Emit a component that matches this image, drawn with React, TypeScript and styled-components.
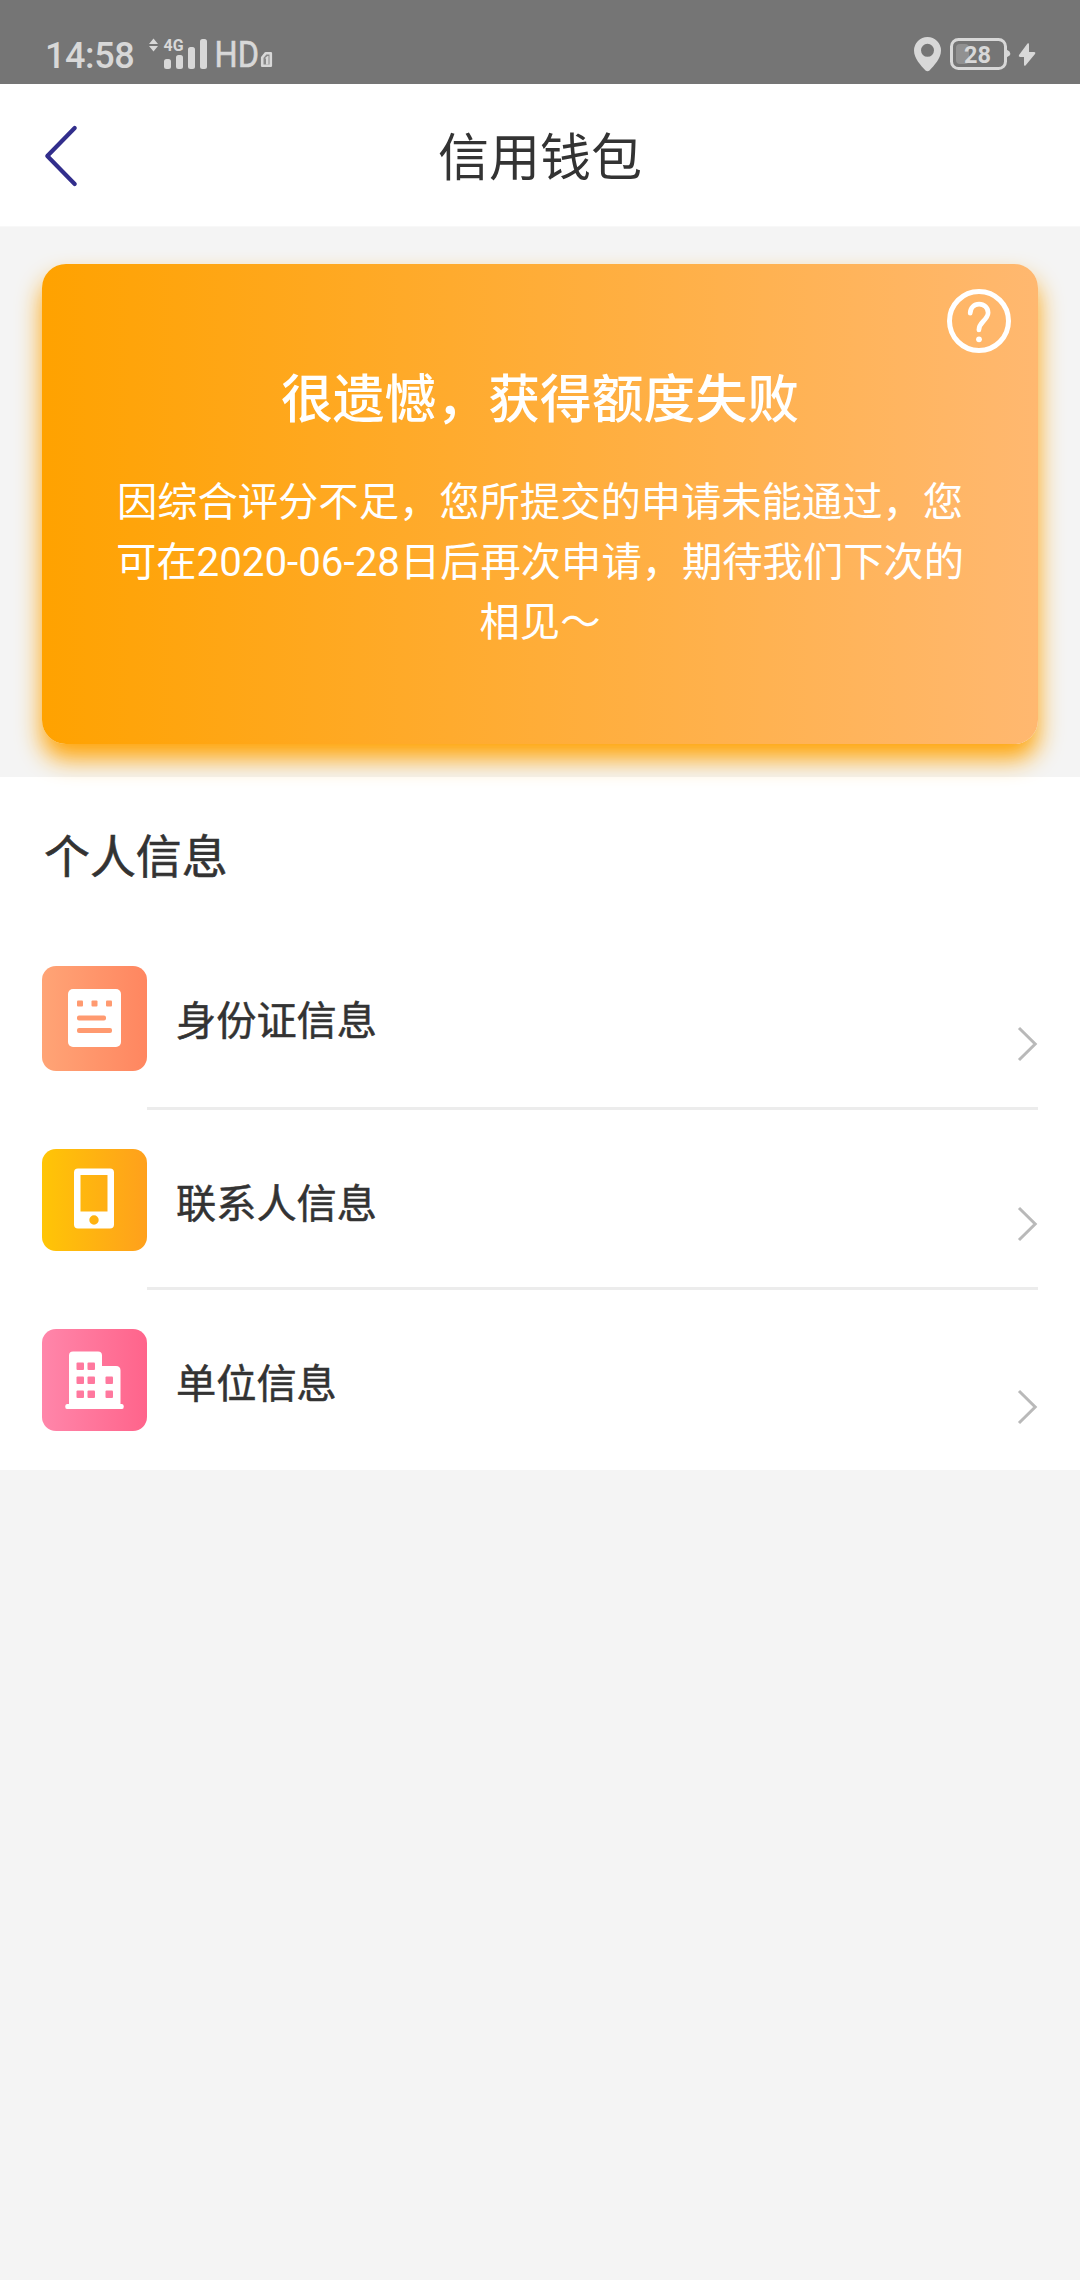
import React from "react";
import styled, { createGlobalStyle } from "styled-components";

const GlobalStyle = createGlobalStyle`
  * { box-sizing: border-box; }
  body {
    margin: 0;
    background: #f4f4f4;
    color: #333;
    font-family: Roboto, "Noto Sans CJK SC", sans-serif;
  }
  h1, h2, h3, p, ul { margin: 0; padding: 0; font-weight: 400; }
  svg { display: block; flex: none; }
`;

const Page = styled.main`
  display: flex;
  flex-direction: column;
  width: 1080px;
  min-height: 2280px;
  background: #f4f4f4;
`;

const StatusBar = styled.div`
  display: flex;
  justify-content: space-between;
  height: 84px;
  padding: 0 42px 0 45px;
  background: #757575;
  color: #d8d8d8;
`;

const StatusGroup = styled.div`
  display: flex;
  align-items: flex-start;
`;

const Clock = styled.span`
  width: 103px;
  padding-top: 36px;
  font-size: 36px;
  letter-spacing: -0.4px;
  line-height: 40px;
  font-weight: 500;
  white-space: nowrap;
`;

const Header = styled.header`
  display: grid;
  grid-template-columns: 120px 1fr 120px;
  align-items: center;
  height: 143px;
  background: #fff;
  border-bottom: 1px solid #f8f8f8;
`;

const BackButton = styled.button`
  display: flex;
  padding: 2px 0 0 42px;
  border: 0;
  background: none;
`;

const Title = styled.h1`
  padding-top: 7px;
  font-size: 51px;
  line-height: 70px;
  font-weight: 400;
  text-align: center;
`;

const Banner = styled.section`
  height: 550px;
  padding: 37px 42px 33px;
`;

const ResultCard = styled.article`
  position: relative;
  z-index: 1;
  display: flex;
  flex-direction: column;
  height: 480px;
  padding: 25px 27px 0;
  border-radius: 24px;
  background: linear-gradient(90deg, #ffa200, #ffb870);
  box-shadow: 0 15px 24px #ffa509;
  color: #fff;
  text-align: center;
`;

const HelpButton = styled.button`
  align-self: flex-end;
  display: flex;
  padding: 0;
  border: 0;
  background: none;
`;

const ResultTitle = styled.h2`
  margin-top: 12px;
  font-size: 51.8px;
  line-height: 72px;
  font-weight: 500;
`;

const ResultText = styled.p`
  width: 860px;
  margin: 36px auto 0;
  font-size: 40.3px;
  line-height: 60px;
  font-weight: 400;
`;

const InfoSection = styled.section`
  display: flex;
  flex-direction: column;
  height: 693px;
  background: #fff;
`;

const SectionTitle = styled.h2`
  height: 153px;
  padding: 4px 0 0 44px;
  font-size: 45.9px;
  line-height: 153px;
  font-weight: 400;
  -webkit-text-stroke: 0.6px #333;
`;

const InfoList = styled.ul`
  list-style: none;
`;

const InfoRow = styled.li`
  display: flex;
  height: 180px;
  padding: 0 42px;
`;

const Tile = styled.span<{ $from: string; $to: string; $top: number; $height: number }>`
  display: flex;
  flex: none;
  width: 105px;
  height: ${(p) => p.$height}px;
  margin-top: ${(p) => p.$top}px;
  border-radius: 14px;
  background: linear-gradient(90deg, ${(p) => p.$from}, ${(p) => p.$to});
`;

const RowBody = styled.div<{ $divider: boolean }>`
  display: flex;
  flex: 1;
  justify-content: space-between;
  border-bottom: ${(p) => (p.$divider ? "3px solid #ececec" : "0")};
`;

const RowLabel = styled.h3<{ $offset: number }>`
  padding: ${(p) => p.$offset}px 0 0 29px;
  font-size: 40.200px;
  line-height: 60px;
  font-weight: 400;
  -webkit-text-stroke: 0.5px #333;
`;

const RowArrow = styled.span<{ $offset: number }>`
  padding-top: ${(p) => p.$offset}px;
`;

const NetworkIcons = () => (
  <svg width="150" height="84" viewBox="148 0 150 84" fill="#d8d8d8">
    <path d="M149 44l4.500-5.500 4.500 5.500zM149 46h9l-4.500 5.500z" />
    <text x="163.500" y="51" fontFamily="Roboto, sans-serif" fontSize="17" fontWeight="700" textLength="20" lengthAdjust="spacingAndGlyphs">4G</text>
    <rect x="164" y="59" width="7" height="10" rx="2.500" />
    <rect x="176" y="55" width="7" height="14" rx="2.500" />
    <rect x="188" y="47" width="7" height="22" rx="2.500" />
    <rect x="200" y="39" width="7" height="30" rx="2.500" />
    <text x="214.500" y="67" fontFamily="Roboto, sans-serif" fontSize="36" textLength="44.500" lengthAdjust="spacingAndGlyphs" stroke="#d8d8d8" strokeWidth="0.600">HD</text>
    <path fill="#8a8a8a" stroke="#d8d8d8" strokeWidth="2.600" strokeLinejoin="round" d="M265.800 53.200h5v12.600h-8.600V57.500z" />
    <path d="M264.800 58.300l2.700-2.200h1v8.400h-2.500v-6z" />
  </svg>
);

const PowerIcons = () => (
  <svg width="126" height="84" viewBox="912 0 126 84" fill="#d8d8d8">
    <path fillRule="evenodd" d="M927.500 37a13.500 13.500 0 0 1 13.500 13.500c0 8-7 15-11.500 20q-2 1.500-4 0C921 65.500 914 58.500 914 50.500A13.500 13.500 0 0 1 927.500 37zM927.500 43.800a6.500 6.500 0 1 0 0 13 6.500 6.500 0 0 0 0-13z" />
    <rect x="951.500" y="39.500" width="54" height="29" rx="7" fill="none" stroke="#d8d8d8" strokeWidth="3" />
    <rect x="956" y="44" width="13" height="20" rx="4" fill="#919191" />
    <path d="M1006.500 49.500l3 2q1.500 2 0 4l-3 2z" />
    <text x="964" y="63" fontFamily="Roboto, sans-serif" fontSize="24" fontWeight="700" textLength="27" lengthAdjust="spacingAndGlyphs">28</text>
    <path d="M1027.500 43.500q1.500-1 1.500 1v7.500h5q2 0 1 2l-9.500 11.500q-1.500 1-1.500-1V57h-4q-2-.5-1-2z" />
  </svg>
);

const BackIcon = () => (
  <svg width="38" height="64" viewBox="0 0 38 64" fill="none" stroke="#322e8c" strokeWidth="4.200" strokeLinecap="round" strokeLinejoin="round">
    <path d="M32.700 4L5.300 32l27.400 28" />
  </svg>
);

const HelpIcon = () => (
  <svg width="64" height="64" viewBox="0 0 64 64" fill="none" stroke="#fff" strokeLinecap="round" strokeLinejoin="round">
    <circle cx="32" cy="32" r="29.500" strokeWidth="5" />
    <path d="M23.200 24.200c0-5.500 4-9.100 8.900-9.100s9 3.600 9 8.700c0 3.500-2 5.600-5 8.700-3 3-4.200 4.700-4.200 8.500" strokeWidth="4.700" />
    <circle cx="32" cy="50.300" r="2.900" fill="#fff" stroke="none" />
  </svg>
);

const ArrowIcon = () => (
  <svg width="21" height="36" viewBox="0 0 21 36" fill="none" stroke="#b9b9b9" strokeWidth="3">
    <path d="M2 2L18.200 18 2 34" />
  </svg>
);

const IdCardIcon = () => (
  <svg width="105" height="105" viewBox="0 0 105 105">
    <rect x="26" y="23" width="53" height="58" rx="5" fill="#fff" />
    <g fill="#ff9a70">
      <rect x="35" y="34.500" width="6" height="6" rx="1" />
      <rect x="49.500" y="34.500" width="6" height="6" rx="1" />
      <rect x="64" y="34.500" width="6" height="6" rx="1" />
      <rect x="35" y="49.500" width="29" height="5" rx="2" />
      <rect x="35" y="62" width="35" height="5" rx="2" />
    </g>
  </svg>
);

const PhoneIcon = () => (
  <svg width="105" height="102" viewBox="0 0 105 102">
    <path fill="#fff" fillRule="evenodd" d="M36 19.500h32q4 0 4 4v52q0 4-4 4H36q-4 0-4-4v-52q0-4 4-4zM38.500 26v36.500h27V26zM52 66.300a4.700 4.700 0 1 0 0 9.400 4.700 4.700 0 0 0 0-9.400z" />
  </svg>
);

const OfficeIcon = () => (
  <svg width="105" height="102" viewBox="0 0 105 102">
    <path fill="#fff" d="M31 22.500h25q4 0 4 4V37h14q4.500 0 4.500 4.500V75h1.500q1.800 0 1.800 2.500t-1.800 2.500H25q-1.800 0-1.800-2.500T25 75h2V26.500q0-4 4-4z" />
    <g fill="#ff789e">
      <rect x="34.500" y="33.500" width="7.500" height="7.500" rx="1" />
      <rect x="45.500" y="33.500" width="7.500" height="7.500" rx="1" />
      <rect x="34.500" y="47.500" width="7.500" height="7.500" rx="1" />
      <rect x="45.500" y="47.500" width="7.500" height="7.500" rx="1" />
      <rect x="63.500" y="47.500" width="7.500" height="7.500" rx="1" />
      <rect x="34.500" y="61.500" width="7.500" height="7.500" rx="1" />
      <rect x="45.500" y="61.500" width="7.500" height="7.500" rx="1" />
      <rect x="63.500" y="61.500" width="7.500" height="7.500" rx="1" />
    </g>
  </svg>
);

const rows = [
  { label: "身份证信息", from: "#ffa476", to: "#ff8660", top: 36, height: 105, labelTop: 62, arrowTop: 96, Icon: IdCardIcon },
  { label: "联系人信息", from: "#ffc506", to: "#ffa01c", top: 39, height: 102, labelTop: 65, arrowTop: 96, Icon: PhoneIcon },
  { label: "单位信息", from: "#ff86aa", to: "#ff648b", top: 39, height: 102, labelTop: 65, arrowTop: 99, Icon: OfficeIcon },
];

export default function App() {
  return (
    <>
      <GlobalStyle />
      <Page>
        <StatusBar>
          <StatusGroup>
            <Clock>14:58</Clock>
            <NetworkIcons />
          </StatusGroup>
          <StatusGroup>
            <PowerIcons />
          </StatusGroup>
        </StatusBar>
        <Header>
          <BackButton aria-label="返回">
            <BackIcon />
          </BackButton>
          <Title>信用钱包</Title>
        </Header>
        <Banner>
          <ResultCard>
            <HelpButton aria-label="帮助">
              <HelpIcon />
            </HelpButton>
            <ResultTitle>很遗憾，获得额度失败</ResultTitle>
            <ResultText>
              因综合评分不足，您所提交的申请未能通过，您可在2020-06-28日后再次申请，期待我们下次的相见～
            </ResultText>
          </ResultCard>
        </Banner>
        <InfoSection>
          <SectionTitle>个人信息</SectionTitle>
          <InfoList>
            {rows.map(({ label, from, to, top, height, labelTop, arrowTop, Icon }, i) => (
              <InfoRow key={label}>
                <Tile $from={from} $to={to} $top={top} $height={height}>
                  <Icon />
                </Tile>
                <RowBody $divider={i < rows.length - 1}>
                  <RowLabel $offset={labelTop}>{label}</RowLabel>
                  <RowArrow $offset={arrowTop}>
                    <ArrowIcon />
                  </RowArrow>
                </RowBody>
              </InfoRow>
            ))}
          </InfoList>
        </InfoSection>
      </Page>
    </>
  );
}
